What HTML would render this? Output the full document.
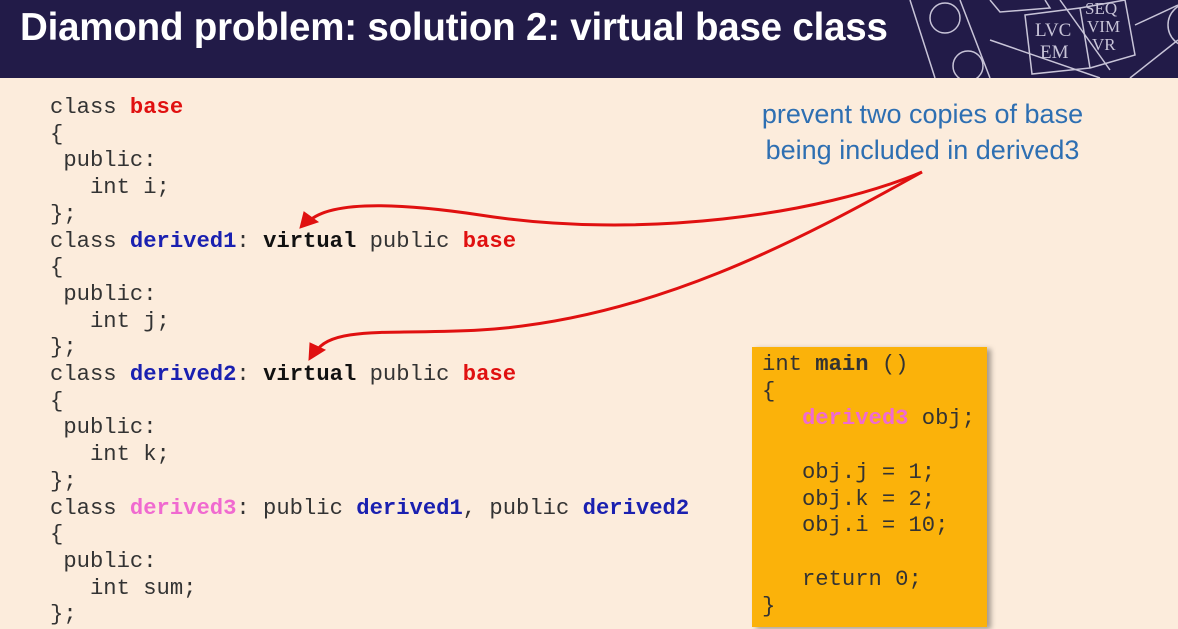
<!DOCTYPE html>
<html><head><meta charset="utf-8"><style>
body{margin:0;width:1178px;height:622px;overflow:hidden;background:#fcecdc;position:relative;font-family:"Liberation Sans",sans-serif}
.hdr{position:absolute;left:0;top:0;width:1178px;height:78px;background:#221b48}
.title{position:absolute;left:20px;top:6px;color:#fff;font-weight:bold;font-size:38.5px;letter-spacing:-0.2px;white-space:nowrap}
pre{margin:0;position:absolute;font-family:"Liberation Mono",monospace;font-size:22.2px;line-height:26.7px;color:#333}
b{font-weight:bold}
.r{color:#e01010}.bl{color:#1a20b0}.p{color:#f06ad0}.k{color:#111}
.box{position:absolute;left:752px;top:347px;width:235px;height:280px;background:#fbb20a;box-shadow:4px 2px 5px rgba(0,0,0,.35)}
.note{position:absolute;left:720px;top:96px;width:405px;text-align:center;color:#2e6fb2;font-size:27px;line-height:36px;white-space:nowrap}
</style></head><body>
<div class="hdr">
<svg style="position:absolute;left:900px;top:0" width="278" height="78" fill="none" stroke="#c8c4d8" stroke-width="1.5">
<circle cx="45" cy="18" r="15"/><circle cx="68" cy="66" r="15"/><path d="M10 0 L35 78 M60 0 L90 78 M90 40 L200 78 M160 0 L210 70"/>
<path d="M90 0 L100 12 L150 8 L145 0"/>
<path d="M125 15 L180 8 L190 68 L132 74 Z M180 8 L225 0 L235 55 L190 68"/>
<text x="135" y="36" fill="#c8c4d8" stroke="none" font-family="Liberation Serif" font-size="19">LVC</text>
<text x="140" y="58" fill="#c8c4d8" stroke="none" font-family="Liberation Serif" font-size="19">EM</text>
<text x="185" y="14" fill="#c8c4d8" stroke="none" font-family="Liberation Serif" font-size="17">SEQ</text>
<text x="187" y="32" fill="#c8c4d8" stroke="none" font-family="Liberation Serif" font-size="17">VIM</text>
<text x="192" y="50" fill="#c8c4d8" stroke="none" font-family="Liberation Serif" font-size="17">VR</text>
<path d="M235 25 L278 5 M230 78 L278 40"/><circle cx="290" cy="25" r="22"/>
</svg>
<div class="title">Diamond problem: solution 2: virtual base class</div>
</div>
<pre style="left:50px;top:95px">class <b class="r">base</b>
{
 public:
   int i;
};
class <b class="bl">derived1</b>: <b class="k">virtual</b> public <b class="r">base</b>
{
 public:
   int j;
};
class <b class="bl">derived2</b>: <b class="k">virtual</b> public <b class="r">base</b>
{
 public:
   int k;
};
class <b class="p">derived3</b>: public <b class="bl">derived1</b>, public <b class="bl">derived2</b>
{
 public:
   int sum;
};</pre>
<div class="box"></div>
<pre style="left:762px;top:352px;line-height:26.9px">int <b>main</b> ()
{
   <b class="p">derived3</b> obj;

   obj.j = 1;
   obj.k = 2;
   obj.i = 10;

   return 0;
}</pre>
<div class="note">prevent two copies of base<br>being included in derived3</div>
<svg style="position:absolute;left:0;top:0" width="1178" height="622" fill="none" stroke="#e01010" stroke-width="3">
<path d="M922 172 C 820 215, 640 240, 480 215 C 400 203, 330 200, 308 222"/>
<path d="M922 172 C 800 240, 650 320, 480 330 C 400 335, 330 325, 316 352"/>
<path d="M300 228 L318 222 L304 212 Z" fill="#e01010" stroke-width="1"/>
<path d="M309 360 L325 350 L310 343 Z" fill="#e01010" stroke-width="1"/>
</svg>
</body></html>
